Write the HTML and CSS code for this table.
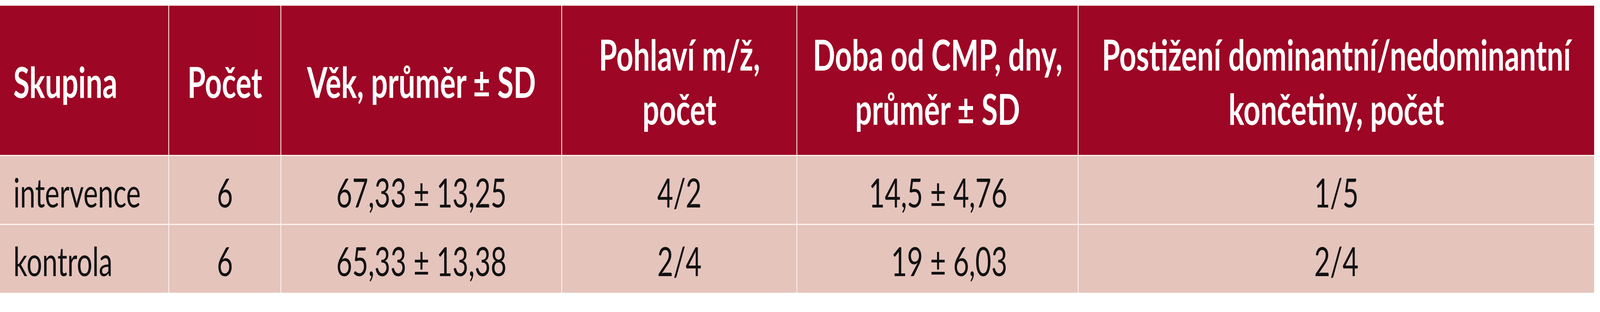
FILE: index.html
```html
<!DOCTYPE html>
<html lang="cs">
<head>
<meta charset="utf-8">
<title>Charakteristika souboru</title>
<link rel="stylesheet" href="styles.css">
</head>
<body>
<div class="frame">
  <div class="table" role="table">
    <div class="th first"><span>Skupina</span></div>
    <div class="th"><span>Počet</span></div>
    <div class="th"><span>Věk, průměr ± SD</span></div>
    <div class="th"><span>Pohlaví m/ž,<br>počet</span></div>
    <div class="th"><span>Doba od CMP, dny,<br>průměr ± SD</span></div>
    <div class="th"><span>Postižení dominantní/nedominantní<br>končetiny, počet</span></div>

    <div class="td first"><span>intervence</span></div>
    <div class="td"><span>6</span></div>
    <div class="td"><span>67,33 ± 13,25</span></div>
    <div class="td"><span>4/2</span></div>
    <div class="td"><span><span class="lead">14,5</span> ± 4,76</span></div>
    <div class="td"><span>1/5</span></div>

    <div class="td first"><span>kontrola</span></div>
    <div class="td"><span>6</span></div>
    <div class="td"><span>65,33 ± 13,38</span></div>
    <div class="td"><span>2/4</span></div>
    <div class="td"><span><span class="lead">19</span> ± 6,03</span></div>
    <div class="td"><span>2/4</span></div>
  </div>
</div>
</body>
</html>
```
FILE: styles.css
```css
:root {
  /* one pixel of the 5981px-wide reference frame, measured across the window */
  --px: calc(100vw / 5981);
}

html {
  margin: 0;
  padding: 0;
  background: #ffffff;
  overflow: hidden;
}

body {
  margin: 0;
  padding: 0;
  min-height: 100vh;
  font-family: "Lato", "Open Sans", "Liberation Sans", sans-serif;
}

/* The window is narrower than the 5981px frame but just as tall,
   so the frame is stretched back to the full 800px height. */
.frame {
  padding-top: calc(15 * var(--px));
  transform: scaleY(1.4602);
  transform-origin: 0 0;
}

.table {
  display: grid;
  width: calc(5959 * var(--px));
  grid-template-columns:
    calc(629 * var(--px))
    calc(417 * var(--px))
    calc(1047 * var(--px))
    calc(876 * var(--px))
    calc(1048 * var(--px))
    calc(1927 * var(--px));
  grid-template-rows:
    calc(382 * var(--px))
    calc(174 * var(--px))
    calc(173 * var(--px));
  gap: calc(3 * var(--px));
  background: #fdf4f2;
}

.th,
.td {
  display: flex;
  justify-content: center;
  text-align: center;
  white-space: nowrap;
}

.th {
  align-items: center;
  background: #9d0624;
  color: #ffffff;
  font-weight: 700;
  font-size: calc(110 * var(--px));
  line-height: calc(138 * var(--px));
  padding-top: calc(5 * var(--px));
}

.td {
  align-items: flex-start;
  background: #e5c4bc;
  color: #111111;
  font-size: calc(103 * var(--px));
  line-height: 1.2;
  padding-top: calc(31 * var(--px));
}

.first {
  justify-content: flex-start;
  text-align: left;
  padding-left: calc(50 * var(--px));
}

.lead {
  display: inline-block;
  width: 2em;
  text-align: right;
}
```
